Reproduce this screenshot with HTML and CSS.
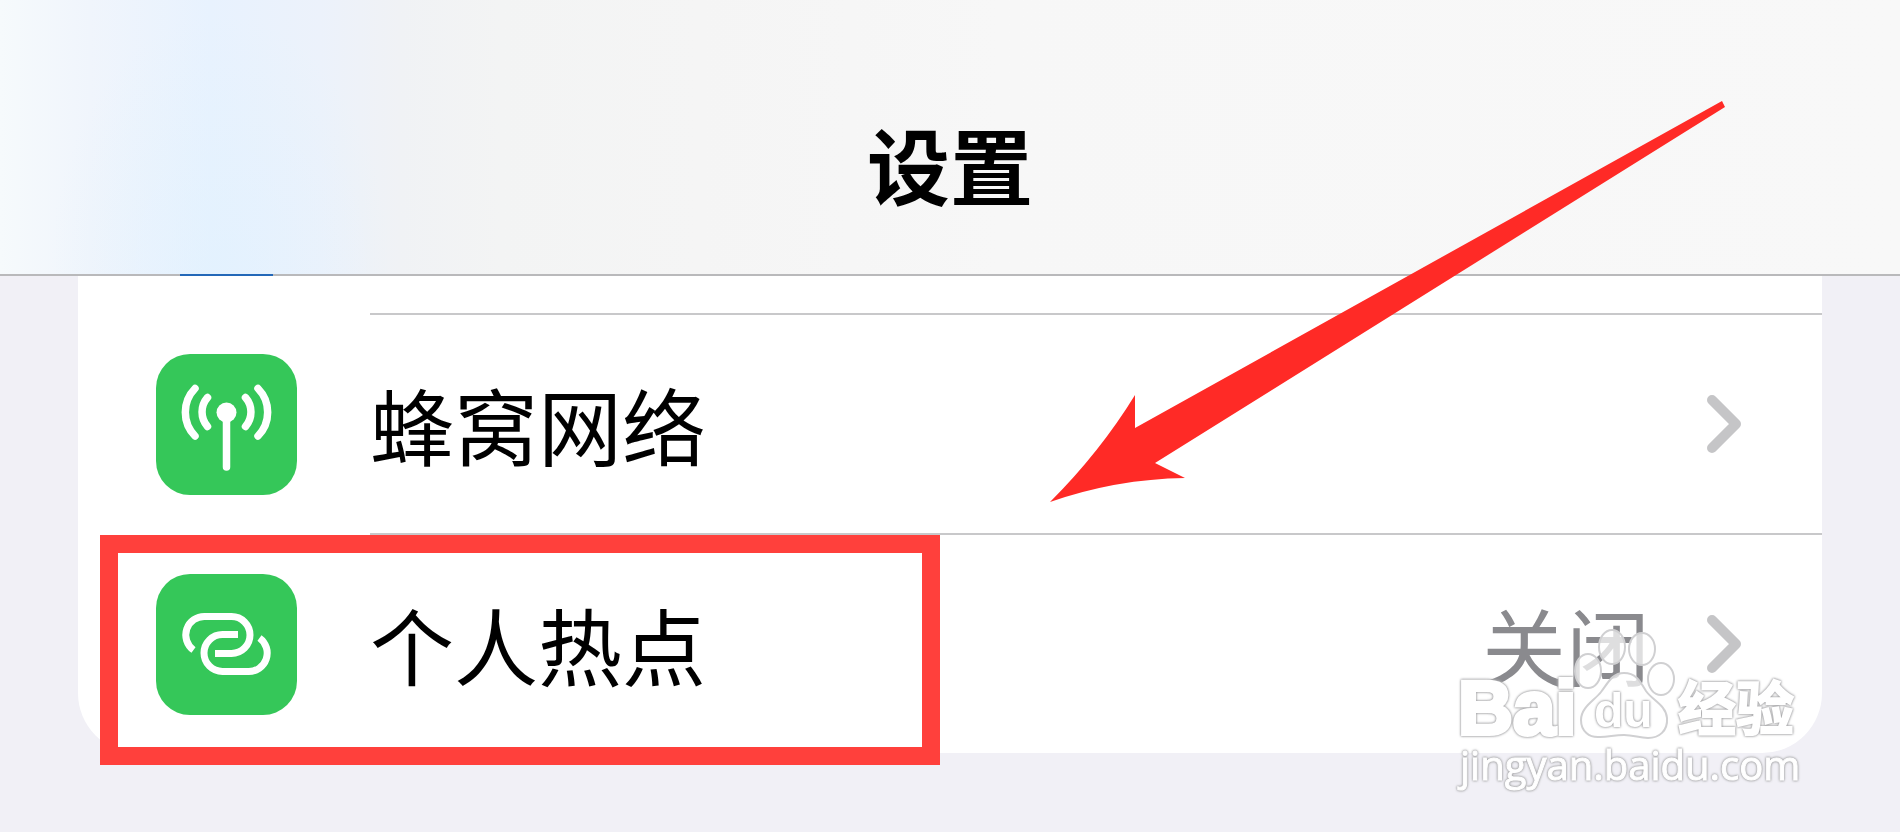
FILE: index.html
```html
<!DOCTYPE html>
<html lang="zh-CN">
<head>
    <meta charset="UTF-8">
    <title>设置</title>
    <link rel="stylesheet" href="styles.css">
</head>
<body>
    <header class="navbar">
        <h1>设置</h1>
    </header>

    <main class="settings">
        <ul class="card">
            <li class="row-previous"></li>
            <li>
                <a class="row" href="#cellular">
                    <svg class="row-icon" viewBox="0 0 141 141" aria-hidden="true">
                        <g fill="none" stroke="#fff" stroke-width="7.500" stroke-linecap="round">
                            <path d="M39 34.500 A34 34 0 0 0 39 82"/>
                            <path d="M51.500 43.500 A22 22 0 0 0 51.500 72.500"/>
                            <path d="M89.500 43.500 A22 22 0 0 1 89.500 72.500"/>
                            <path d="M102 34.500 A34 34 0 0 1 102 82"/>
                            <path d="M70.500 60 V113"/>
                        </g>
                        <circle cx="70.500" cy="58.500" r="10" fill="#fff"/>
                    </svg>
                    <span class="row-body">
                        <span class="row-label">蜂窝网络</span>
                        <svg class="chevron" viewBox="0 0 34 58" aria-hidden="true"><path d="M5 5 L29 29 L5 53"/></svg>
                    </span>
                </a>
            </li>
            <li>
                <a class="row" href="#hotspot">
                    <svg class="row-icon" viewBox="0 0 141 141" aria-hidden="true">
                        <g fill="none" stroke="#fff" stroke-width="7">
                            <path d="M59 79.500 H75.500 A18.500 18.500 0 0 0 75.500 42.500 H49 A18.500 18.500 0 0 0 37.500 76"/>
                            <path d="M82 60.500 H66.500 A18.500 18.500 0 0 0 66.500 97.500 H92 A18.500 18.500 0 0 0 103.500 64"/>
                        </g>
                    </svg>
                    <span class="row-body">
                        <span class="row-label">个人热点</span>
                        <span class="row-value">关闭</span>
                        <svg class="chevron" viewBox="0 0 34 58" aria-hidden="true"><path d="M5 5 L29 29 L5 53"/></svg>
                    </span>
                </a>
            </li>
        </ul>
    </main>

    <!-- annotations over the page -->
    <div class="highlight"></div>
    <svg class="arrow" viewBox="0 0 676 402" aria-hidden="true">
        <path d="M0 402 Q50 352 85 295 V328 L672 1 L675 7 L105 363 L135 378 Q66 379 0 402 Z"/>
    </svg>

    <svg class="watermark" viewBox="0 0 360 190" role="img" aria-label="Baidu 经验">
        <g class="toes">
            <ellipse cx="138" cy="51" rx="13" ry="17"/>
            <ellipse cx="162" cy="27" rx="13" ry="17"/>
            <ellipse cx="192" cy="29" rx="13" ry="16"/>
            <ellipse cx="211" cy="59" rx="13" ry="16"/>
            <path d="M174 53 C162 53 158 63 151 72 C145 80 131 87 131 100 C131 111 139 118 150 117 C159 117 164 115 174 115 C184 115 189 118 198 118 C209 118 218 111 217 98 C216 85 202 80 196 71 C190 61 186 53 174 53 Z"/>
        </g>
        <text class="mark mark-bai" x="8" y="114">Bai</text>
        <text class="mark mark-du" x="144" y="107">du</text>
        <text class="mark mark-cn" x="228" y="110">经验</text>
        <text class="mark mark-url" x="10" y="160">jingyan.baidu.com</text>
    </svg>
</body>
</html>
```
FILE: styles.css
```css
body, h1, ul {
    margin: 0;
    padding: 0;
}

body {
    position: relative;
    min-height: 100vh;
    background-color: #f1f0f6;
    color: #000;
    font-family: "Noto Sans CJK SC", sans-serif;
    overflow-x: hidden;
}

.navbar {
    position: relative;
    box-sizing: border-box;
    height: 276px;
    padding-top: 52px;
    display: flex;
    align-items: center;
    justify-content: center;
    border-bottom: 2px solid #b9b9bb;
    background:
        radial-gradient(ellipse 170px 260px at 220px 100%, rgba(222, 241, 255, 0.5), rgba(222, 241, 255, 0)),
        linear-gradient(to right, #f6fafc 0, #f0f5fc 90px, #e8f2fe 210px, #ecf2fb 320px, #f0f2f5 400px, #f3f4f4 500px, #f5f5f5 700px, #f7f7f7 1000px, #f8f8f8 100%);
}

/* bottom edge of the icon scrolled under the bar */
.navbar::after {
    content: "";
    position: absolute;
    left: 180px;
    bottom: -2px;
    width: 93px;
    height: 2px;
    background-color: #2368b8;
}

.navbar h1 {
    font-size: 83px;
    line-height: 120px;
    font-weight: bold;
}

.settings {
    padding: 0 78px 78px;
}

.card {
    list-style: none;
    background-color: #fff;
    border-radius: 0 0 60px 60px;
}

.row-previous {
    height: 37px;
}

.row {
    display: flex;
    align-items: center;
    padding-left: 78px;
    color: inherit;
    text-decoration: none;
}

.row-icon {
    flex: none;
    width: 141px;
    height: 141px;
    margin-top: 2px;
    border-radius: 34px;
    background-color: #35c759;
}

.row-body {
    flex: 1;
    box-sizing: border-box;
    height: 220px;
    margin-left: 73px;
    padding-right: 81px;
    display: flex;
    align-items: center;
    border-top: 2px solid #c8c8ca;
}

.row-label, .row-value {
    font-size: 84px;
    line-height: 120px;
}

.row-label {
    flex: 1;
}

.row-value {
    margin-right: 57px;
    color: #8a8a8e;
}

.chevron {
    width: 34px;
    height: 58px;
    fill: none;
    stroke: #c5c5c7;
    stroke-width: 10;
    stroke-linecap: round;
    stroke-linejoin: round;
}

.highlight {
    position: absolute;
    top: 535px;
    left: 100px;
    box-sizing: border-box;
    width: 840px;
    height: 230px;
    border: 18px solid #ff403c;
    pointer-events: none;
}

.arrow {
    position: absolute;
    top: 100px;
    right: 174px;
    width: 676px;
    height: 402px;
    fill: #ff2a26;
    pointer-events: none;
}

.watermark {
    position: absolute;
    top: 620px;
    right: 90px;
    width: 360px;
    height: 190px;
    pointer-events: none;
}

.toes {
    fill: rgba(255, 255, 255, 0.72);
    stroke: #d0d0d2;
    stroke-width: 2px;
}

.mark {
    fill: #fff;
    stroke: #fff;
    stroke-width: 2px;
    filter: drop-shadow(0 0 1px #98989a) drop-shadow(0 0 1px #c4c4c6);
}

.mark-bai, .mark-du {
    font-family: "Liberation Sans", sans-serif;
    font-weight: bold;
}

.mark-bai {
    font-size: 76px;
    stroke-width: 4px;
}

.mark-du {
    font-size: 48px;
    stroke-width: 0;
}

.mark-cn {
    font-size: 58px;
    font-weight: bold;
}

.mark-url {
    font-family: "Open Sans", sans-serif;
    font-size: 40px;
    stroke-width: 1px;
}
```
